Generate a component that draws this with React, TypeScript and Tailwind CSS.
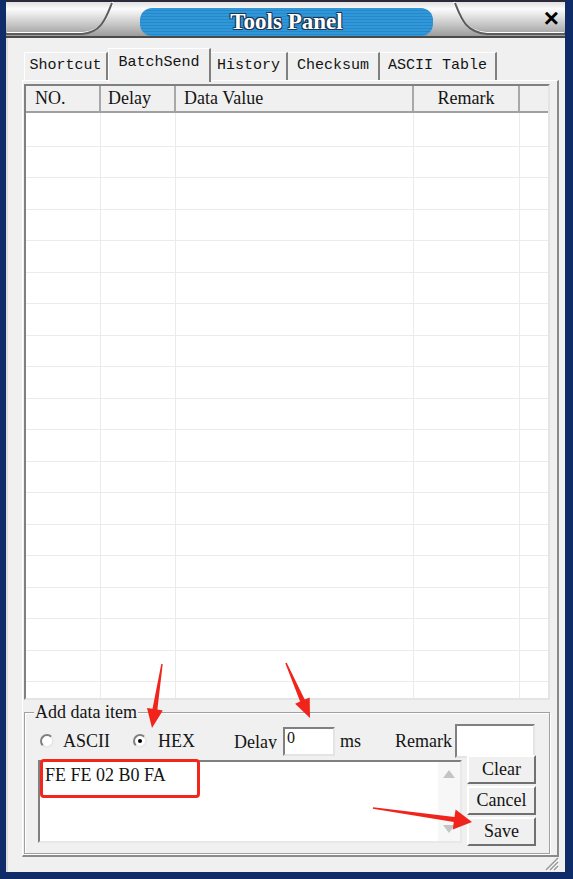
import React from "react";

// one tapered red arrow, tail -> tip
const arrowPoints = (tx: number, ty: number, px: number, py: number, len: number, half: number, w0: number, w1: number) => {
  const d = Math.hypot(px - tx, py - ty);
  const ux = (px - tx) / d;
  const uy = (py - ty) / d;
  const nx = -uy;
  const ny = ux;
  const bx = px - ux * len;
  const by = py - uy * len;
  const pts = [
    [tx + (nx * w0) / 2, ty + (ny * w0) / 2],
    [bx + (nx * w1) / 2, by + (ny * w1) / 2],
    [bx + nx * half, by + ny * half],
    [px, py],
    [bx - nx * half, by - ny * half],
    [bx - (nx * w1) / 2, by - (ny * w1) / 2],
    [tx - (nx * w0) / 2, ty - (ny * w0) / 2],
  ];
  return pts.map((p) => p.map((v) => v.toFixed(1)).join(",")).join(" ");
};

const tabs = [
  { label: "Shortcut", cls: "w-[84px] h-[28px] border-t border-l border-white" },
  { label: "BatchSend", cls: "w-[103px] h-[34px] -mb-[2px] z-10 border-t border-l border-white pb-[4px]" },
  { label: "History", cls: "w-[77px] h-[28px] border-t border-white" },
  { label: "Checksum", cls: "w-[92px] h-[28px] border-t border-white" },
  { label: "ASCII Table", cls: "w-[117px] h-[28px] border-t border-white" },
];

const rows = Array.from({ length: 19 });

const Radio = ({ checked }: { checked?: boolean }) => (
  <span className="w-[14px] h-[14px] rounded-full bg-white border-2 border-t-[#808080] border-l-[#808080] border-r-[#e8e8e8] border-b-[#e8e8e8] flex items-center justify-center">
    {checked && <span className="w-[4px] h-[4px] rounded-full bg-black" />}
  </span>
);

const Btn = ({ label }: { label: string }) => (
  <div className="h-[29px] bg-[#f0f0f0] border-2 border-t-white border-l-white border-r-[#707070] border-b-[#707070] flex items-center justify-center">
    {label}
  </div>
);

export default function App() {
  return (
    <div className="relative w-[573px] h-[879px] bg-[#0f2c69] pl-[6px] pr-[8px] pb-[7px] flex flex-col font-['Liberation_Serif',serif] text-[18px] text-[#141414] overflow-hidden">
      {/* title bar */}
      <div className="relative h-[38px] flex items-start border-b-2 border-[#4a4a4a]">
        <svg className="absolute inset-0" width="559" height="36" viewBox="0 0 559 36">
          <defs>
            <linearGradient id="silver" x1="0" y1="0" x2="0" y2="1">
              <stop offset="0" stopColor="#d9d9d9" />
              <stop offset="0.25" stopColor="#fbfbfb" />
              <stop offset="0.6" stopColor="#d0d0d0" />
              <stop offset="1" stopColor="#9c9c9c" />
            </linearGradient>
          </defs>
          <rect x="0" y="0" width="559" height="36" fill="url(#silver)" />
          <rect x="0" y="0" width="559" height="2" fill="#2a2a3a" />
          <path d="M106 3 C100 18, 96 32, 76 34 L0 34" fill="none" stroke="#ffffff" strokeWidth="2" transform="translate(1,-1)" />
          <path d="M106 3 C100 18, 96 32, 76 34 L0 34" fill="none" stroke="#5c5c5c" strokeWidth="2" />
          <path d="M449 3 C455 18, 459 32, 481 34 L559 34" fill="none" stroke="#ffffff" strokeWidth="2" transform="translate(-1,-1)" />
          <path d="M449 3 C455 18, 459 32, 481 34 L559 34" fill="none" stroke="#5c5c5c" strokeWidth="2" />
        </svg>
        <div className="relative ml-[134px] mt-[8px] w-[293px] h-[28px] rounded-[12px] bg-[repeating-linear-gradient(180deg,#3097d8_0px,#3097d8_2px,#2688c9_2px,#2688c9_3px)] flex items-center justify-center">
          <span className="text-[23px] font-bold text-white [text-shadow:1px_1px_0_#1b3550,-1px_-1px_0_#1b3550,1px_-1px_0_#1b3550,-1px_1px_0_#1b3550]">
            Tools Panel
          </span>
        </div>
        <span className="relative ml-auto mr-[6px] mt-[6px] font-['Liberation_Sans',sans-serif] font-bold text-[26px] leading-[24px] text-black">
          ×
        </span>
      </div>

      {/* body */}
      <div className="flex-1 flex flex-col bg-[#f0f0f0] border-l-2 border-[#dcdcdc] pl-[14px] pr-[6px] pt-[10px]">
        {/* tabs */}
        <div className="flex items-end h-[32px] pl-[2px] font-['Liberation_Mono',monospace] text-[15px]">
          {tabs.map((t) => (
            <div
              key={t.label}
              className={`relative bg-[#f0f0f0] border-r-2 border-r-[#808080] flex items-center justify-center ${t.cls}`}
            >
              {t.label}
            </div>
          ))}
        </div>

        {/* tab page */}
        <div className="flex flex-col border-t border-l border-white border-r-2 border-r-[#8a8a8a] border-b-2 border-b-[#8a8a8a] pl-[1px] pr-[7px] pt-[3px] pb-[1px]">
          {/* list view */}
          <div className="h-[616px] flex flex-col bg-white border-2 border-t-[#808080] border-l-[#808080] border-r-[#e4e4e4] border-b-[#e4e4e4] overflow-hidden">
            <div className="flex h-[27px] shrink-0 bg-[#f0f0f0] border-b-2 border-[#a0a0a0]">
              <div className="w-[75px] border-r-2 border-[#a8a8a8] pl-[9px] flex items-center">NO.</div>
              <div className="w-[75px] border-r-2 border-[#a8a8a8] pl-[7px] flex items-center">Delay</div>
              <div className="w-[238px] border-r-2 border-[#a8a8a8] pl-[8px] flex items-center">Data Value</div>
              <div className="w-[106px] border-r-2 border-[#a8a8a8] flex items-center justify-center">Remark</div>
              <div className="flex-1" />
            </div>
            <div className="h-[2px] shrink-0 flex">
              <div className="w-[75px] border-r border-[#ebebeb]" />
              <div className="w-[75px] border-r border-[#ebebeb]" />
              <div className="w-[238px] border-r border-[#ebebeb]" />
              <div className="w-[106px] border-r border-[#ebebeb]" />
            </div>
            {rows.map((_, i) => (
              <div key={i} className="flex h-[31.5px] shrink-0 border-b border-[#ebebeb]">
                <div className="w-[75px] border-r border-[#ebebeb]" />
                <div className="w-[75px] border-r border-[#ebebeb]" />
                <div className="w-[238px] border-r border-[#ebebeb]" />
                <div className="w-[106px] border-r border-[#ebebeb]" />
                <div className="flex-1" />
              </div>
            ))}
          </div>

          {/* group box */}
          <div className="relative mt-[12px] h-[142px] border border-[#a0a0a0] shadow-[inset_1px_1px_0_#ffffff,1px_1px_0_#ffffff] pl-[13px] pt-[11px]">
            <span className="absolute -top-[12px] left-[9px] bg-[#f0f0f0] px-[1px] leading-[22px]">Add data item</span>
            <div className="flex items-center h-[34px]">
              <div className="w-[93px] ml-[2px] flex items-center gap-[9px]">
                <Radio />
                <span>ASCII</span>
              </div>
              <div className="w-[101px] flex items-center gap-[11px]">
                <Radio checked />
                <span>HEX</span>
              </div>
              <span className="w-[49px] inline-block h-[16px] leading-[18px] overflow-hidden">Delay</span>
              <div className="w-[52px] h-[29px] bg-white border-2 border-t-[#808080] border-l-[#808080] border-r-[#e4e4e4] border-b-[#e4e4e4] pl-[2px] leading-[18px] text-[16px]">
                0
              </div>
              <span className="w-[60px] pl-[5px]">ms</span>
              <span className="w-[60px]">Remark</span>
              <div className="w-[80px] h-[34px] bg-white border-2 border-t-[#808080] border-l-[#808080] border-r-[#e4e4e4] border-b-[#e4e4e4]" />
            </div>
            <div className="flex items-start -mt-[3px]">
              <div className="relative mt-[5px] w-[424px] h-[83px] flex bg-white border-2 border-t-[#808080] border-l-[#808080] border-r-[#e8e8e8] border-b-[#e8e8e8]">
                <div className="flex-1 pl-[5px] pt-[2px] leading-[22px]">FE FE 02 B0 FA</div>
                <div className="w-[22px] flex flex-col items-center justify-between py-[8px] bg-[#f7f7f7]">
                  <svg width="12" height="8" viewBox="0 0 12 8">
                    <path d="M6 0 L12 8 L0 8 Z" fill="#c4c4c4" />
                  </svg>
                  <svg width="12" height="8" viewBox="0 0 12 8">
                    <path d="M0 0 L12 0 L6 8 Z" fill="#c4c4c4" />
                  </svg>
                </div>
                <div className="absolute -top-[3px] left-0 w-[160px] h-[39px] border-[3px] border-[#f2261c] rounded-[4px]" />
              </div>
              <div className="ml-[5px] w-[69px] flex flex-col gap-[2px]">
                <Btn label="Clear" />
                <Btn label="Cancel" />
                <Btn label="Save" />
              </div>
            </div>
          </div>
        </div>

        {/* resize grip */}
        <div className="flex-1 flex justify-end items-end pr-[0px] pb-[1px]">
          <svg width="16" height="14" viewBox="0 0 16 14">
            <path d="M15 1 L3 13 M15 5 L7 13 M15 9 L11 13" stroke="#9a9a9a" strokeWidth="1.5" />
            <path d="M16 2 L4 14 M16 6 L8 14 M16 10 L12 14" stroke="#ffffff" strokeWidth="1" />
          </svg>
        </div>
      </div>

      {/* annotation arrows */}
      <svg className="absolute inset-0 pointer-events-none" width="573" height="879" viewBox="0 0 573 879">
        <polygon points={arrowPoints(162, 664, 152, 728, 19, 8, 1.5, 5)} fill="#f0241b" />
        <polygon points={arrowPoints(286, 663, 310, 718, 19, 8, 1.5, 5)} fill="#f0241b" />
        <polygon points={arrowPoints(373, 808, 472, 822, 18, 10, 1.5, 5)} fill="#f0241b" />
      </svg>
    </div>
  );
}
